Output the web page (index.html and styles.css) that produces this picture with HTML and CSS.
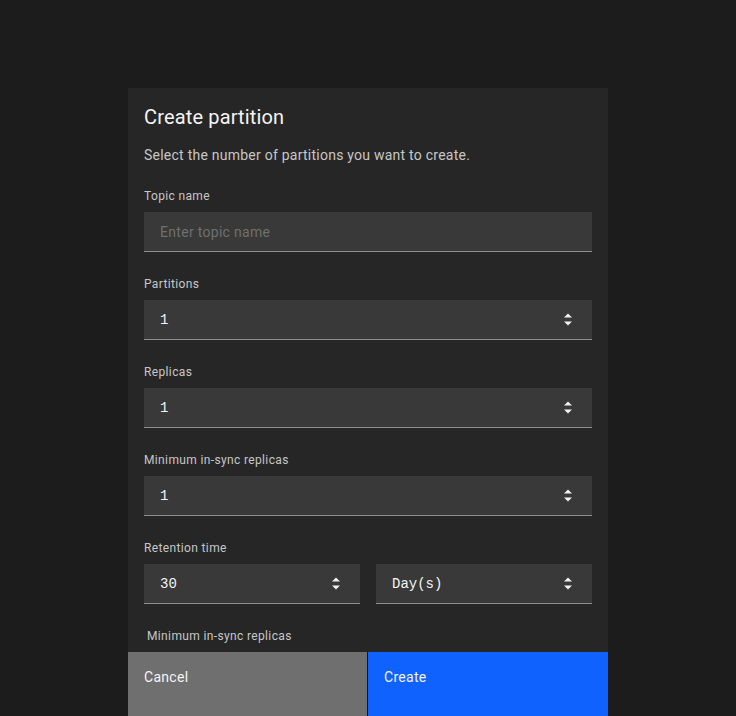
FILE: index.html
```html
<!DOCTYPE html>
<html>
<head>
<meta charset="utf-8">
<link rel="stylesheet" href="styles.css">
</head>
<body>
<div class="overlay">
  <div class="modal">
    <div class="content">
      <h2 class="title">Create partition</h2>
      <p class="desc">Select the number of partitions you want to create.</p>

      <div class="field">
        <label class="label">Topic name</label>
        <div class="input"><span class="placeholder">Enter topic name</span></div>
      </div>

      <div class="field">
        <label class="label">Partitions</label>
        <div class="input num"><span class="value">1</span>
          <svg class="sort" width="8" height="13" viewBox="0 0 8 13"><path d="M0 4.5L4 0.5L8 4.5Z M0 8.5L4 12.5L8 8.5Z" fill="#f4f4f4"/></svg>
        </div>
      </div>

      <div class="field">
        <label class="label">Replicas</label>
        <div class="input num"><span class="value">1</span>
          <svg class="sort" width="8" height="13" viewBox="0 0 8 13"><path d="M0 4.5L4 0.5L8 4.5Z M0 8.5L4 12.5L8 8.5Z" fill="#f4f4f4"/></svg>
        </div>
      </div>

      <div class="field">
        <label class="label">Minimum in-sync replicas</label>
        <div class="input num"><span class="value">1</span>
          <svg class="sort" width="8" height="13" viewBox="0 0 8 13"><path d="M0 4.5L4 0.5L8 4.5Z M0 8.5L4 12.5L8 8.5Z" fill="#f4f4f4"/></svg>
        </div>
      </div>

      <div class="field">
        <label class="label">Retention time</label>
        <div class="row">
          <div class="input num"><span class="value">30</span>
            <svg class="sort" width="8" height="13" viewBox="0 0 8 13"><path d="M0 4.5L4 0.5L8 4.5Z M0 8.5L4 12.5L8 8.5Z" fill="#f4f4f4"/></svg>
          </div>
          <div class="input num"><span class="value">Day(s)</span>
            <svg class="sort" width="8" height="13" viewBox="0 0 8 13"><path d="M0 4.5L4 0.5L8 4.5Z M0 8.5L4 12.5L8 8.5Z" fill="#f4f4f4"/></svg>
          </div>
        </div>
      </div>

      <div class="label extra">Minimum in-sync replicas</div>
    </div>
    <div class="footer">
      <button class="btn secondary">Cancel</button>
      <button class="btn primary">Create</button>
    </div>
  </div>
</div>
</body>
</html>
```

FILE: styles.css
```css
html, body {
  margin: 0;
  padding: 0;
  background: #1c1c1c;
  font-family: Roboto, "Noto Sans", sans-serif;
  color: #f4f4f4;
}
.overlay {
  height: 716px;
  overflow: hidden;
  display: flex;
  justify-content: center;
  padding-top: 88px;
  box-sizing: border-box;
}
.modal {
  width: 480px;
  background: #262626;
  display: flex;
  flex-direction: column;
  align-self: flex-start;
}
.content {
  padding: 15px 16px 8px 16px;
}
.title {
  margin: 0;
  font-size: 20px;
  font-weight: 400;
  line-height: 28px;
  color: #f4f4f4;
  letter-spacing: 0.15px;
}
.desc {
  margin: 14px 0 23px 0;
  font-size: 14px;
  line-height: 20px;
  color: #c6c6c6;
  letter-spacing: 0.24px;
}
.field {
  margin-bottom: 24px;
}
.label {
  display: block;
  font-size: 12px;
  line-height: 16px;
  color: #c6c6c6;
  letter-spacing: 0.36px;
  margin-bottom: 8px;
}
.extra {
  margin: 0 0 0 3px;
}
.input {
  height: 39px;
  background: #393939;
  border-bottom: 1px solid #8d8d8d;
  display: flex;
  align-items: center;
  padding: 0 20px 0 16px;
  font-size: 14px;
}
.placeholder {
  color: #6f6f6f;
  letter-spacing: 0.3px;
}
.value {
  flex: 1;
  font-family: "Liberation Mono", "DejaVu Sans Mono", monospace;
  font-size: 14px;
  line-height: 20px;
  padding-top: 1px;
  color: #f4f4f4;
}
.sort {
  display: block;
}
.row {
  display: grid;
  grid-template-columns: 1fr 1fr;
  gap: 16px;
}
.footer {
  display: flex;
  gap: 1px;
  background: #161616;
  height: 64px;
}
.btn {
  border: 0;
  margin: 0;
  text-align: left;
  padding: 15px 16px;
  display: flex;
  align-items: flex-start;
  font-family: Roboto, "Noto Sans", sans-serif;
  font-size: 14px;
  line-height: 20px;
  letter-spacing: 0.3px;
  color: #f4f4f4;
}
.secondary {
  flex: 0 0 239px;
  background: #6f6f6f;
}
.primary {
  flex: 1;
  background: #0f62fe;
}
```
